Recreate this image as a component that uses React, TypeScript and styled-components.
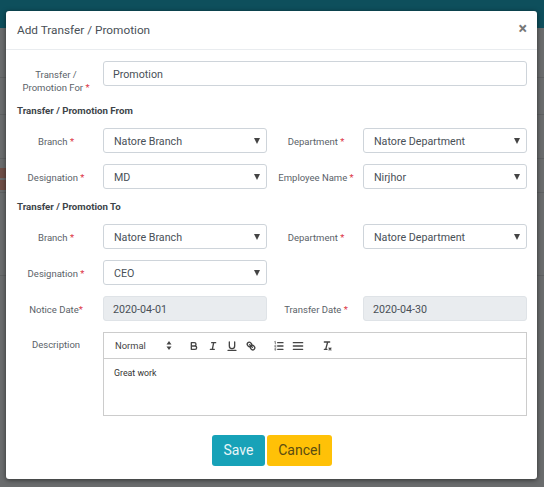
import styled, { createGlobalStyle } from "styled-components"

const GlobalStyle = createGlobalStyle`
  html, body {
    margin: 0;
    padding: 0;
    height: 487px;
    overflow: hidden;
    background: #6a6c6d;
    font-family: Roboto, "Liberation Sans", sans-serif;
  }
`

const Req = () => <Star>*</Star>

type SelectProps = { value: string }

function FakeSelect({ value }: SelectProps) {
  return (
    <SelectBox>
      <SelectText>{value}</SelectText>
      <svg width="6" height="6" viewBox="0 0 6 6" fill="#444">
        <path d="M0 0h6L3 6z" />
      </svg>
    </SelectBox>
  )
}

export default function App() {
  return (
    <>
      <GlobalStyle />
      <Page>
        <Backdrop>
          <TopBar />
          <BackRow $height={50} />
          <BackRow $height={37} />
          <BackRow $height={44} />
          <BackRow $height={34}>
            <BackMark />
          </BackRow>
          <BackRow $height={83} />
        </Backdrop>
        <Modal>
          <Header>
            <Title>Add Transfer / Promotion</Title>
            <Close>×</Close>
          </Header>
          <Body>
            <FirstRow>
              <Label>Transfer /<br />Promotion For <Req /></Label>
              <TextBox>Promotion</TextBox>
            </FirstRow>
            <Section>Transfer / Promotion From</Section>
            <Row>
              <Label>Branch <Req /></Label>
              <FakeSelect value="Natore Branch" />
              <Label>Department <Req /></Label>
              <FakeSelect value="Natore Department" />
            </Row>
            <Row>
              <Label>Designation <Req /></Label>
              <FakeSelect value="MD" />
              <Label>Employee Name <Req /></Label>
              <FakeSelect value="Nirjhor" />
            </Row>
            <Section>Transfer / Promotion To</Section>
            <Row>
              <Label>Branch <Req /></Label>
              <FakeSelect value="Natore Branch" />
              <Label>Department <Req /></Label>
              <FakeSelect value="Natore Department" />
            </Row>
            <Row>
              <Label>Designation <Req /></Label>
              <FakeSelect value="CEO" />
            </Row>
            <Row>
              <Label>Notice Date<Req /></Label>
              <TextBox $disabled>2020-04-01</TextBox>
              <Label>Transfer Date <Req /></Label>
              <TextBox $disabled>2020-04-30</TextBox>
            </Row>
            <EditorRow>
              <Label>Description</Label>
              <Editor>
                <Toolbar>
                  <Normal>Normal</Normal>
                  <svg width="6" height="9" viewBox="0 0 6 9" fill="#444">
                    <path d="M3 0 5.500 3.400H.5zM3 9 .5 5.600h5z" />
                  </svg>
                  <IconGroup>
                    <ToolIcon viewBox="0 0 18 18">
                      <path d="M5 4h4.500a2.500 2.500 0 0 1 0 5H5zM5 9h5.500a2.500 2.500 0 0 1 0 5H5z" />
                    </ToolIcon>
                    <ToolIcon viewBox="0 0 18 18">
                      <path d="M7 4h6M5 14h6M8 14l2-10" />
                    </ToolIcon>
                    <ToolIcon viewBox="0 0 18 18">
                      <path d="M5 3v6a4 4 0 0 0 8 0V3M3 15.500h12" />
                    </ToolIcon>
                    <ToolIcon viewBox="0 0 18 18">
                      <path d="M7 7l4 4" />
                      <path d="M8.900 4.577a3.476 3.476 0 0 1 .36 4.679A3.476 3.476 0 0 1 4.577 8.900C3.185 7.500 2.035 6.400 4.217 4.217S7.500 3.185 8.900 4.577Z" />
                      <path d="M13.423 9.100a3.476 3.476 0 0 0-4.679-.36 3.476 3.476 0 0 0 .36 4.679c1.392 1.392 2.500 2.542 4.679.36S14.815 10.500 13.423 9.100Z" />
                    </ToolIcon>
                  </IconGroup>
                  <ListGroup>
                    <ToolIcon viewBox="0 0 18 18">
                      <path d="M7 4h8M7 9h8M7 14h8" />
                      <path strokeWidth="1" d="M2.500 2.500l1-.5v3.500M2.500 8.200c.6-.8 1.900-.4 1.800.4-.1.700-1.800 1.400-1.800 1.900h2M2.500 13c.6-.6 1.800-.3 1.800.4 0 .4-.3.600-.6.600.4 0 .7.300.7.700 0 .8-1.400 1-1.900.3" />
                    </ToolIcon>
                    <ToolIcon viewBox="0 0 18 18">
                      <path d="M2 4h14M2 9h14M2 14h14" />
                    </ToolIcon>
                  </ListGroup>
                  <ToolIcon viewBox="0 0 18 18">
                    <path d="M5 3h8M5 14h4M10 3 7 14" />
                    <path strokeWidth="1.600" d="M12 12l3 3M15 12l-3 3" />
                  </ToolIcon>
                </Toolbar>
                <EditorText>Great work</EditorText>
              </Editor>
            </EditorRow>
            <Actions>
              <Button $bg="#17a2b8" $fg="#e8f6f8" $width={53}>Save</Button>
              <Button $bg="#ffc107" $fg="#5a4c12" $width={65}>Cancel</Button>
            </Actions>
          </Body>
        </Modal>
      </Page>
    </>
  )
}

const Page = styled.div`
  position: relative;
  width: 544px;
  height: 487px;
  padding: 11px 7px 0 6px;
  box-sizing: border-box;
  overflow: hidden;
`

const Backdrop = styled.div`
  position: absolute;
  top: 0;
  left: 0;
  right: 0;
  bottom: 0;
`

const TopBar = styled.div`
  height: 28px;
  background: #0e4f5c;
`

const BackRow = styled.div<{ $height: number }>`
  height: ${props => props.$height}px;
  box-sizing: border-box;
  padding-top: 9px;
  border-bottom: 1px solid #5f6162;
`

const BackMark = styled.div`
  width: 6px;
  height: 22px;
  background: linear-gradient(#6f4f47 0 45%, transparent 45% 55%, #6f4f47 55%);
`

const Modal = styled.div`
  position: relative;
  height: 468px;
  background: #fff;
  border-radius: 3px;
  box-shadow: 0 1px 5px rgba(0, 0, 0, 0.55);
`

const Header = styled.div`
  display: flex;
  justify-content: space-between;
  align-items: flex-start;
  height: 39px;
  box-sizing: border-box;
  padding: 0 10px 0 11px;
  border-bottom: 1px solid #e9ecef;
`

const Title = styled.div`
  font-size: 11.8px;
  line-height: 38px;
  color: #495057;
`

const Close = styled.div`
  font-size: 16px;
  font-weight: 700;
  line-height: 36px;
  color: #777;
`

const Body = styled.div`
  display: flex;
  flex-direction: column;
  padding: 11px 10px 0 11px;
`

const Row = styled.div`
  display: flex;
  align-items: center;
  height: 25px;
  margin-bottom: 11px;
`

const FirstRow = styled(Row)`
  align-items: flex-start;
  height: 36px;
  margin-bottom: 7px;
`

const EditorRow = styled.div`
  display: flex;
  align-items: flex-start;
`

const Label = styled.div`
  flex: none;
  width: 86px;
  box-sizing: border-box;
  padding: 2px 8px 0 0;
  text-align: center;
  white-space: nowrap;
  font-size: 9.5px;
  line-height: 13px;
  color: #5a6268;

  &:nth-child(3) {
    width: 96px;
    padding: 2px 8px 0 10px;
  }

  ${EditorRow} > & {
    padding-top: 6px;
  }

  ${FirstRow} > & {
    padding-top: 7px;
  }
`

const Star = styled.span`
  color: #dc3545;
`

const Section = styled.div`
  height: 13px;
  margin: 0 0 11px;
  font-size: 9.7px;
  font-weight: 700;
  line-height: 13px;
  color: #3d4449;
`

const TextBox = styled.div<{ $disabled?: boolean }>`
  flex: 1;
  min-width: 0;
  height: 25px;
  box-sizing: border-box;
  padding: 0 9px;
  border: 1px solid ${props => (props.$disabled ? "#dfe3e7" : "#ced4da")};
  border-radius: 3px;
  background: ${props => (props.$disabled ? "#e9ecef" : "#fff")};
  font-size: 10.7px;
  line-height: 25px;
  color: #495057;
`

const SelectBox = styled.div`
  display: flex;
  flex: none;
  justify-content: space-between;
  align-items: center;
  width: 164px;
  height: 25px;
  box-sizing: border-box;
  padding: 0 6px 0 10px;
  border: 1px solid #ced4da;
  border-radius: 3px;
  background: #fff;
  font-size: 10.7px;
  color: #495057;
`

const SelectText = styled.span`
  padding-top: 2px;
`

const Editor = styled.div`
  flex: 1;
  height: 84px;
  box-sizing: border-box;
  border: 1px solid #ccc;
`

const Toolbar = styled.div`
  display: flex;
  align-items: center;
  height: 26px;
  box-sizing: border-box;
  padding: 0 0 0 11px;
  border-bottom: 1px solid #ccc;
`

const ToolIcon = styled.svg`
  flex: none;
  width: 12px;
  height: 12px;
  fill: none;
  stroke: #444;
  stroke-width: 2;
  stroke-linecap: round;
  stroke-linejoin: round;
`

const Normal = styled.span`
  width: 51px;
  font-size: 9.4px;
  color: #444;
`

const IconGroup = styled.div`
  display: flex;
  align-items: center;
  gap: 7px;
  margin-left: 16px;
`

const ListGroup = styled.div`
  display: flex;
  align-items: center;
  gap: 7px;
  margin: 0 17px 0 16px;
`

const EditorText = styled.div`
  padding: 8px 10px;
  font-size: 8.8px;
  line-height: 12px;
  color: #333;
`

const Actions = styled.div`
  display: flex;
  justify-content: center;
  gap: 2px;
  margin-top: 19px;
`

const Button = styled.div<{ $bg: string; $fg: string; $width: number }>`
  width: ${props => props.$width}px;
  height: 31px;
  border-radius: 3px;
  background: ${props => props.$bg};
  color: ${props => props.$fg};
  font-size: 14px;
  line-height: 31px;
  text-align: center;
`
